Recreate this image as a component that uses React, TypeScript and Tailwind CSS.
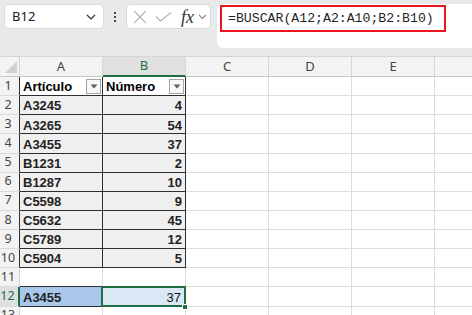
import React from "react";

const cols = ["A", "B", "C", "D", "E", ""];
const data: [string, string][] = [
  ["A3245", "4"],
  ["A3265", "54"],
  ["A3455", "37"],
  ["B1231", "2"],
  ["B1287", "10"],
  ["C5598", "9"],
  ["C5632", "45"],
  ["C5789", "12"],
  ["C5904", "5"],
];

const cellFont = { fontFamily: '"Liberation Sans", Arial, sans-serif' };
const uiFont = { fontFamily: '"Noto Sans", "Open Sans", sans-serif' };

function FilterBtn() {
  return (
    <div className="w-[15px] h-[15px] border border-[#a6a6a6] bg-[#f7f7f7] flex items-center justify-center shrink-0">
      <svg width="8" height="5" viewBox="0 0 8 5">
        <path d="M0.5 0.5 L7.5 0.5 L4 4.5 Z" fill="#5f5f5f" />
      </svg>
    </div>
  );
}

function RowHeader({ n, dark, selected }: { n: number; dark?: boolean; selected?: boolean }) {
  return (
    <div
      className={
        "flex items-center justify-center pr-[3px] text-[12.5px] border-b border-b-[#dadada] " +
        (selected
          ? "bg-[#e0e0e0] text-[#1e6e42] border-r-2 border-r-[#1e6e42]"
          : dark
          ? "bg-[#f3f3f3] text-[#444] border-r border-r-[#2e2e2e]"
          : "bg-[#f3f3f3] text-[#444] border-r border-r-[#d0d0d0]")
      }
      style={uiFont}
    >
      {n}
    </div>
  );
}

function Empty({ darkBottom }: { darkBottom?: boolean }) {
  return (
    <div
      className={
        "bg-white border-r border-r-[#dcdcdc] border-b " +
        (darkBottom ? "border-b-[#2e2e2e]" : "border-b-[#dcdcdc]")
      }
    />
  );
}

export default function App() {
  return (
    <div className="w-[472px] h-[315px] overflow-hidden bg-white relative">
      {/* toolbar */}
      <div className="h-[57px] bg-[#e8e9eb] flex items-start pt-[4px] pl-[4px] border-b border-b-[#d6d6d6]">
        <div
          className="w-[100px] h-[25px] bg-white rounded-[5px] border border-[#dadada] flex items-center justify-between pl-[7px] pr-[7px]"
          style={uiFont}
        >
          <span className="text-[13px] text-[#222]">B12</span>
          <svg width="10" height="6" viewBox="0 0 10 6">
            <path d="M1 1 L5 5 L9 1" stroke="#333" strokeWidth="1.2" fill="none" />
          </svg>
        </div>
        <div className="w-[22px] h-[25px] flex flex-col items-center justify-center gap-[2px]">
          <div className="w-[2px] h-[2px] bg-[#444]" />
          <div className="w-[2px] h-[2px] bg-[#444]" />
          <div className="w-[2px] h-[2px] bg-[#444]" />
        </div>
        <div className="w-[85px] h-[25px] bg-white rounded-[5px] border border-[#dadada] flex items-center pl-[6px]">
          <svg width="14" height="14" viewBox="0 0 14 14">
            <path d="M1 1 L13 13 M13 1 L1 13" stroke="#b3b3b3" strokeWidth="1.1" fill="none" />
          </svg>
          <svg width="17" height="10" viewBox="0 0 17 10" className="ml-[8px]">
            <path d="M1 4.5 L5.5 9 L16 0.5" stroke="#b3b3b3" strokeWidth="1.1" fill="none" />
          </svg>
          <span
            className="ml-[9px] text-[18px] italic text-[#333] leading-none"
            style={{ fontFamily: '"Liberation Serif", "Times New Roman", serif' }}
          >
            fx
          </span>
          <svg width="9" height="6" viewBox="0 0 9 6" className="ml-[4px]">
            <path d="M1 1 L4.5 4.5 L8 1" stroke="#8a8a8a" strokeWidth="1.1" fill="none" />
          </svg>
        </div>
        <div className="ml-[6px] flex-1 h-[44px] bg-white rounded-l-[6px] pl-[3px] pt-[1px]">
          <div className="w-[226px] h-[27px] border-2 border-[#e8151f] flex items-center pl-[6px]">
            <span
              className="text-[13.2px] text-[#1f1f1f] whitespace-nowrap"
              style={{ fontFamily: '"Liberation Mono", "DejaVu Sans Mono", monospace' }}
            >
              =BUSCAR(A12;A2:A10;B2:B10)
            </span>
          </div>
        </div>
      </div>

      {/* grid */}
      <div className="grid grid-cols-[20px_83px_83px_83px_83px_83px_83px] grid-rows-[20px_repeat(13,19.14px)]">
        {/* header row */}
        <div className="bg-[#f3f3f3] border-r border-r-[#d0d0d0] border-b border-b-[#c8c8c8] relative">
          <svg width="12" height="12" viewBox="0 0 12 12" className="absolute right-[2px] bottom-[3px]">
            <path d="M12 0 L12 12 L0 12 Z" fill="#d0d0d0" />
          </svg>
        </div>
        {cols.map((c, i) => (
          <div
            key={i}
            className={
              "flex items-center justify-center text-[13px] border-r border-r-[#d6d6d6] " +
              (c === "B"
                ? "bg-[#e1e1e1] text-[#1e6e42] border-b-2 border-b-[#1e6e42]"
                : "bg-[#f3f3f3] text-[#444] border-b border-b-[#c8c8c8]")
            }
            style={uiFont}
          >
            {c}
          </div>
        ))}

        {/* row 1 */}
        <RowHeader n={1} dark />
        <div className="bg-white border-r border-r-[#2e2e2e] border-b border-b-[#2e2e2e] flex items-center justify-between pl-[3px] pr-[1px]">
          <span className="text-[13px] font-bold text-black pt-[1px]" style={cellFont}>Artículo</span>
          <FilterBtn />
        </div>
        <div className="bg-white border-r border-r-[#2e2e2e] border-b border-b-[#2e2e2e] flex items-center justify-between pl-[3px] pr-[1px]">
          <span className="text-[13px] font-bold text-black pt-[1px]" style={cellFont}>Número</span>
          <FilterBtn />
        </div>
        <Empty />
        <Empty />
        <Empty />
        <Empty />

        {/* rows 2-10 */}
        {data.map(([a, b], i) => (
          <React.Fragment key={a}>
            <RowHeader n={i + 2} dark />
            <div className="bg-[#efefef] border-r border-r-[#2e2e2e] border-b border-b-[#2e2e2e] flex items-center pl-[3px] pt-[2px]">
              <span className="text-[13px] font-bold text-[#222]" style={cellFont}>{a}</span>
            </div>
            <div className="bg-[#efefef] border-r border-r-[#2e2e2e] border-b border-b-[#2e2e2e] flex items-center justify-end pr-[3px] pt-[2px]">
              <span className="text-[13px] font-bold text-[#222]" style={cellFont}>{b}</span>
            </div>
            <Empty />
            <Empty />
            <Empty />
            <Empty />
          </React.Fragment>
        ))}

        {/* row 11 */}
        <RowHeader n={11} />
        <Empty darkBottom />
        <Empty />
        <Empty />
        <Empty />
        <Empty />
        <Empty />

        {/* row 12 */}
        <RowHeader n={12} selected />
        <div className="bg-[#a9c8ec] border-r border-r-[#2e2e2e] border-b border-b-[#2e2e2e] flex items-center pl-[3px] pt-[2px]">
          <span className="text-[13px] font-bold text-[#222]" style={cellFont}>A3455</span>
        </div>
        <div className="bg-[#dbe8f6] border-r border-r-[#dcdcdc] border-b border-b-[#dcdcdc] flex items-center justify-end pr-[4px] pt-[2px] relative">
          <span className="text-[13px] text-[#111]" style={cellFont}>37</span>
          <div className="absolute left-[-2px] top-[-1px] right-[-1px] bottom-[-1px] border-2 border-[#1e6e42]" />
          <div className="absolute right-[-3px] bottom-[-4px] w-[6px] h-[6px] bg-[#1e6e42] border border-white" />
        </div>
        <Empty />
        <Empty />
        <Empty />
        <Empty />

        {/* row 13 */}
        <RowHeader n={13} />
        <Empty />
        <Empty />
        <Empty />
        <Empty />
        <Empty />
        <Empty />
      </div>
    </div>
  );
}
